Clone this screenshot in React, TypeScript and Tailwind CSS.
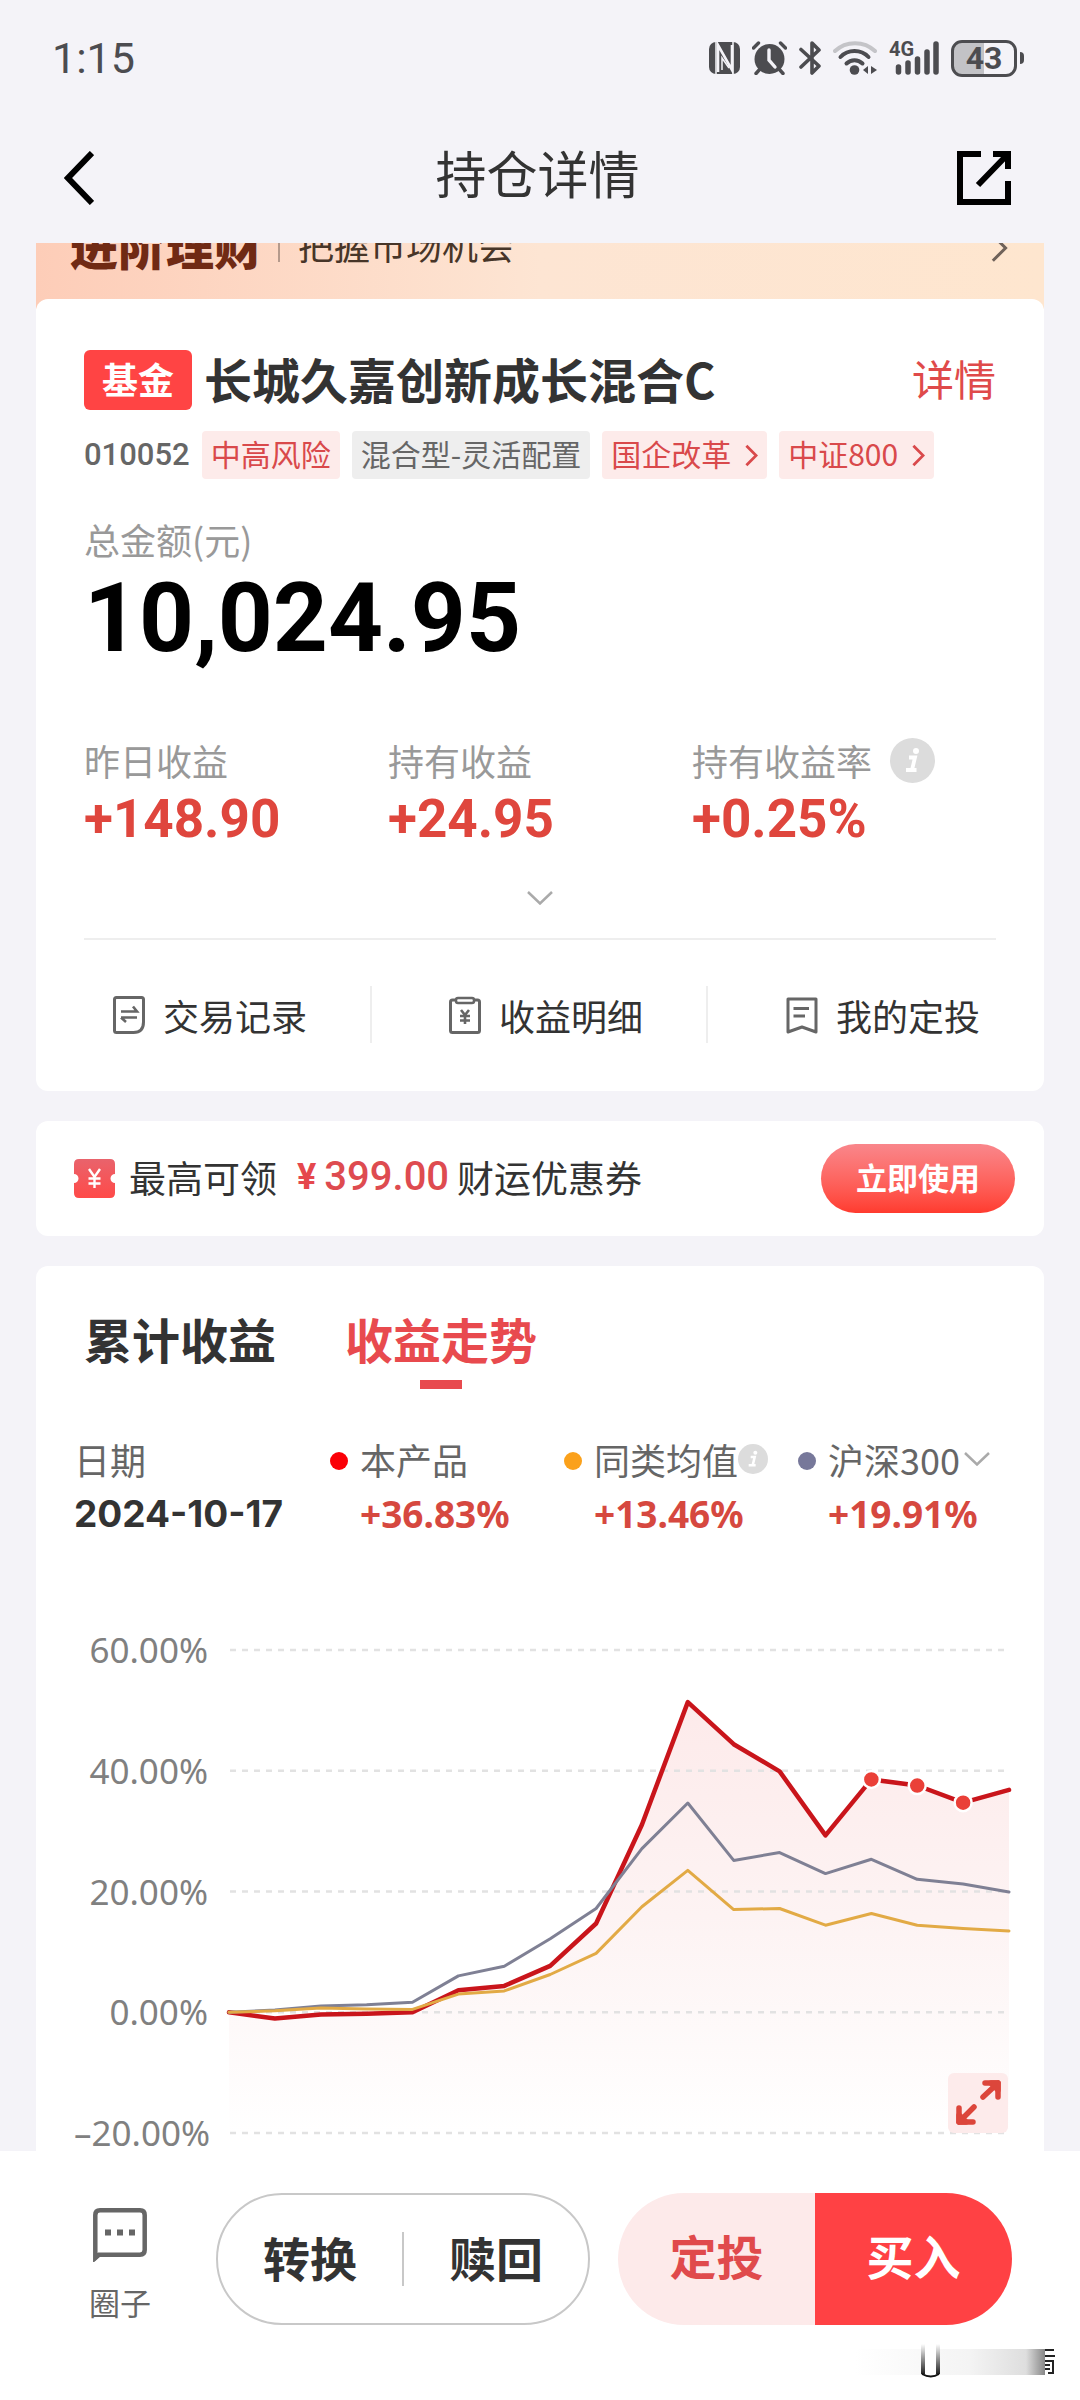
import type { ReactNode } from "react";

const TAGS = [
  { label: "中高风险", tone: "red", link: false },
  { label: "混合型-灵活配置", tone: "gray", link: false },
  { label: "国企改革", tone: "red", link: true },
  { label: "中证800", tone: "red", link: true },
];

const STATS = [
  { label: "昨日收益", value: "+148.90", info: false },
  { label: "持有收益", value: "+24.95", info: false },
  { label: "持有收益率", value: "+0.25%", info: true },
];

const TICKS = [60, 40, 20, 0, -20];

const FUND = [0, -1.06, -0.35, -0.24, 0, 3.66, 4.37, 7.68, 14.7, 31.06, 51.37, 44.4, 39.9, 29.3, 38.56, 37.55, 34.72, 36.83];
const PEERS = [0, 0.24, 0.71, 0.53, 0.47, 3.01, 3.54, 6.26, 9.74, 17.48, 23.5, 17, 17.18, 14.41, 16.35, 14.41, 13.87, 13.46];
const CSI300 = [0, 0.35, 1.06, 1.24, 1.65, 6.02, 7.62, 12.16, 17.18, 27.1, 34.66, 25.15, 26.45, 22.97, 25.33, 22.02, 21.26, 19.91];
const TRADE_DAYS = [14, 15, 16];

// chart geometry, in viewBox units
const W = 780;
const H = 519;
const PAD = 18;
const px = (i: number) => (i * W) / (FUND.length - 1);
const py = (v: number) => PAD + ((60 - v) / 80) * (H - PAD * 2);
const line = (data: number[]) => data.map((v, i) => `${px(i).toFixed(1)},${py(v).toFixed(1)}`).join(" ");

function InfoIcon({ className }: { className: string }) {
  return (
    <svg viewBox="0 0 45 45" className={className} aria-hidden="true">
      <circle cx="22.5" cy="22.5" r="22.5" fill="#dcdcdc" />
      <circle cx="26" cy="13" r="3" fill="#fff" />
      <path d="M19 19.5h6l-3 12.5M16 32h10.5" fill="none" stroke="#fff" strokeWidth="3.8" />
    </svg>
  );
}

function Chevron({ className, width = 2.5 }: { className: string; width?: number }) {
  return (
    <svg viewBox="0 0 14 24" className={className} fill="none" stroke="currentColor" strokeWidth={width} aria-hidden="true">
      <path d="M1.5 1.5 12 12 1.5 22.5" />
    </svg>
  );
}

function ChevronDown({ className }: { className: string }) {
  return (
    <svg viewBox="0 0 26 14" className={className} fill="none" stroke="currentColor" strokeWidth="2.5" aria-hidden="true">
      <path d="M1 1 13 12.5 25 1" />
    </svg>
  );
}

function StatusBar() {
  return (
    <div className="flex h-[116px] items-center justify-between pl-[52px] pr-14 text-[#4c4c50]">
      <span className="font-['Roboto',sans-serif] text-[43px] leading-[48px]">1:15</span>
      <div className="flex items-center gap-3">
        {/* NFC */}
        <svg viewBox="0 0 31 32" className="h-8 w-[31px]">
          <rect width="31" height="32" rx="7" fill="currentColor" />
          <path d="M7 0v32M24 0v32" stroke="#f4f3f8" strokeWidth="1.5" />
          <path d="M9 30V3l14 25V3" fill="none" stroke="#f4f3f8" strokeWidth="2.6" />
          <path d="M13 28V16l7 10" fill="none" stroke="#f4f3f8" strokeWidth="1.5" />
        </svg>
        {/* alarm */}
        <svg viewBox="0 0 35 34" className="h-[34px] w-[35px]" fill="none" stroke="currentColor" strokeLinecap="round">
          <circle cx="17.5" cy="18" r="15" fill="currentColor" stroke="none" />
          <path d="m1.500 7 5-5M33.500 7l-5-5M8 28l-4 4.500M27 28l4 4.500" strokeWidth="3.400" />
          <path d="M17 9v10l6 7" stroke="#f4f3f8" strokeWidth="3.400" />
        </svg>
        {/* bluetooth */}
        <svg viewBox="0 0 22 34" className="h-[34px] w-[22px]" fill="none" stroke="currentColor" strokeWidth="3.600" strokeLinejoin="round" strokeLinecap="round">
          <path d="M2 8.500 20 25l-7 7V2l7 7L2 26" />
        </svg>
        {/* wifi */}
        <svg viewBox="0 0 44 34" className="h-[34px] w-11" fill="none" stroke="currentColor" strokeWidth="4" strokeLinecap="round">
          <path d="M2 10C13-.5 31-.5 42 10" stroke="#c4c4c8" />
          <path d="M7.500 16C15 8 28 8 35.500 16M13.500 22.500c4.500-4.500 11.500-4.500 16 0" />
          <circle cx="21.500" cy="29" r="4.800" fill="currentColor" stroke="none" />
          <path d="M35 25v8l-5-4zM38 25v8l6-4z" fill="currentColor" stroke="none" />
        </svg>
        {/* signal */}
        <div className="relative h-[34px] w-[50px]">
          <span className="absolute -top-0.5 left-0 font-['Roboto',sans-serif] text-[20px] font-bold leading-5">4G</span>
          <svg viewBox="0 0 50 34" className="size-full" stroke="currentColor" strokeWidth="5.500" strokeLinecap="round">
            <path d="M9.500 26v5M19 22v9M28.500 18v13M38 11v20M47 3v28" />
          </svg>
        </div>
        <div className="flex items-center gap-[3px]">
          <span className="flex h-[37px] w-[66px] items-center justify-center rounded-[11px] border-[3px] border-current bg-linear-to-r from-[#c2c2c6] from-50% to-[#f4f3f8] to-50% font-['Roboto',sans-serif] text-[32px] font-bold leading-8">
            43
          </span>
          <span className="h-3 w-1 rounded-r bg-current" />
        </div>
      </div>
    </div>
  );
}

function Header() {
  return (
    <header className="grid h-[127px] grid-cols-[1fr_auto_1fr] items-center pb-1 pl-16 pr-[69px]">
      <button type="button" aria-label="返回" className="w-[54px]">
        <svg viewBox="0 0 30 54" className="h-[54px] w-[30px]" fill="none" stroke="#000" strokeWidth="6">
          <path d="M28 2 4 27l24 25" />
        </svg>
      </button>
      <h1 className="pb-3 text-[51px] leading-[60px] text-[#333]">持仓详情</h1>
      <button type="button" aria-label="分享" className="ml-auto">
        <svg viewBox="0 0 54 54" className="size-[54px]" fill="none" stroke="#000" strokeWidth="6">
          <path d="M24 3H3v48h48V30M36 3h15v15M51 3 21 34" />
        </svg>
      </button>
    </header>
  );
}

function Banner() {
  return (
    <a href="#learn" className="block h-[66px] overflow-hidden bg-linear-to-r from-[#fdcdb8] via-[#fde5d3] via-50% to-[#fee6cf]">
      <div className="-mt-[54px] flex h-[110px] items-center pl-[34px] pr-9">
        <span className="text-[48px] font-black leading-[60px] text-[#702a14]">进阶理财</span>
        <span className="ml-4 h-9 w-0.5 bg-[#b59a8c]" />
        <span className="ml-[18px] text-[36px] leading-[48px] text-[#473528]">把握市场机会</span>
        <Chevron className="ml-auto mt-2 h-[30px] w-[17px] text-[#6f625a]" />
      </div>
    </a>
  );
}

function RecordIcon() {
  return (
    <svg viewBox="0 0 32 38" className="h-[38px] w-8" fill="none" stroke="#666" strokeWidth="3">
      <path d="M3.500 1.500h25q2 0 2 2V26q0 10.500-10 10.500h-17q-2 0-2-2v-31q0-2 2-2z" />
      <path d="M8 15.500h16l-4-5M24 21.500H8M8 21.500l5 4.500" strokeWidth="2.600" />
    </svg>
  );
}

function DetailIcon() {
  return (
    <svg viewBox="0 0 32 38" className="h-[38px] w-8" fill="none" stroke="#666" strokeWidth="3">
      <rect x="1.500" y="4" width="29" height="32.500" rx="2" />
      <rect x="7" y="2" width="18" height="5" rx="2" fill="#fff" strokeWidth="2.500" />
      <path d="m12 14 4 5 4-5M16 19v9M11 20h10M11 24.500h10" strokeWidth="2.600" />
    </svg>
  );
}

function PlanIcon() {
  return (
    <svg viewBox="0 0 32 38" className="h-[38px] w-8" fill="none" stroke="#666" strokeWidth="3" strokeLinejoin="round">
      <path d="M2 3h28v33l-14-5-14 5z" />
      <path d="M7.500 12.500H23M7.500 20H19" />
    </svg>
  );
}

const ACTIONS: { label: string; icon: ReactNode }[] = [
  { label: "交易记录", icon: <RecordIcon /> },
  { label: "收益明细", icon: <DetailIcon /> },
  { label: "我的定投", icon: <PlanIcon /> },
];

function HoldingCard() {
  return (
    <section className="relative -mt-2.5 rounded-xl bg-white pb-12 pt-[51px]">
      <div className="px-12">
        <div className="flex h-[60px] items-center">
          <span className="flex h-[60px] w-[108px] items-center justify-center rounded-md bg-[#ff4444] pb-1 text-[36px] font-bold leading-[48px] text-white">基金</span>
          <h2 className="ml-3 pb-1 text-[48px] font-bold leading-[60px] text-[#333]">长城久嘉创新成长混合C</h2>
          <a href="#detail" className="ml-auto pb-1 text-[42px] leading-[60px] text-[#df4a4a]">详情</a>
        </div>

        <div className="mt-[21px] flex items-center gap-3">
          <span className="font-['Roboto',sans-serif] text-[31px] font-medium leading-[48px] text-[#666]">010052</span>
          {TAGS.map((t) => (
            <span
              key={t.label}
              className={`flex h-12 items-center gap-3.5 rounded px-[9px] pb-1 text-[30px] leading-[44px] ${
                t.tone === "red" ? "bg-[#fdebea] text-[#d9494b]" : "bg-[#eeeeee] text-[#666]"
              }`}
            >
              {t.label}
              {t.link && <Chevron width={3} className="mt-1 h-[23px] w-[13px]" />}
            </span>
          ))}
        </div>

        <p className="mt-9 text-[36px] leading-[48px] text-[#999]">总金额(元)</p>
        <p className="mt-[7px] font-['Roboto',sans-serif] text-[96px] font-bold leading-[96px] text-black">10,024.95</p>

        <dl className="mt-[70px] grid grid-cols-3">
          {STATS.map((s) => (
            <div key={s.label}>
              <dt className="flex items-center gap-[18px] text-[36px] leading-[48px] text-[#999]">
                {s.label}
                {s.info && <InfoIcon className="size-[45px]" />}
              </dt>
              <dd className="mt-[5px] font-['Roboto',sans-serif] text-[53px] font-bold leading-[60px] text-[#df463d]">{s.value}</dd>
            </div>
          ))}
        </dl>

        <button type="button" aria-label="展开" className="mx-auto mt-[42px] block">
          <ChevronDown className="h-3.5 w-[26px] text-[#aaa]" />
        </button>
        <hr className="mt-[33px] border-t-2 border-[#eeeeee]" />
      </div>

      <div className="mt-[46px] grid grid-cols-3 divide-x-2 divide-[#eeeeee]">
        {ACTIONS.map((a) => (
          <button key={a.label} type="button" className="flex h-[57px] items-center justify-center gap-[18px] pl-3.5 text-[36px] leading-[48px] text-[#333]">
            {a.icon}
            {a.label}
          </button>
        ))}
      </div>
    </section>
  );
}

function CouponCard() {
  return (
    <section className="mt-[30px] flex h-[115px] items-center rounded-xl bg-white pl-[38px] pr-[29px]">
      <svg viewBox="0 0 41 39" className="h-[39px] w-[41px]">
        <defs>
          <linearGradient id="ticket" x1="0" y1="0" x2="0" y2="1">
            <stop offset="0" stopColor="#e9636c" />
            <stop offset="1" stopColor="#ff4a48" />
          </linearGradient>
        </defs>
        <path d="M5 0h31q5 0 5 5v10a4.500 4.500 0 0 0 0 9v10q0 5-5 5H5q-5 0-5-5V24a4.500 4.500 0 0 0 0-9V5q0-5 5-5z" fill="url(#ticket)" />
        <path d="m15 10 5.500 8 5.500-8M20.500 18v11M14.500 19.500h12M14.500 24.500h12" fill="none" stroke="#fff" strokeWidth="2.400" />
      </svg>
      <p className="ml-3.5 flex items-center pb-1 text-[37px] leading-[48px] text-[#333]">
        最高可领
        <span className="ml-5 font-['Roboto',sans-serif] text-[36px] font-bold text-[#e5484d]">¥</span>
        <span className="ml-2 font-['Roboto',sans-serif] text-[40px] font-medium text-[#de4b50]">399.00</span>
        <span className="ml-2">财运优惠券</span>
      </p>
      <button type="button" className="ml-auto h-[69px] w-[194px] rounded-full bg-linear-to-b from-[#f9868b] to-[#ff3a2e] pb-1 text-[31px] font-bold leading-[48px] text-white">
        立即使用
      </button>
    </section>
  );
}

function LegendItem({ dot, value, children }: { dot: string; value: string; children: ReactNode }) {
  return (
    <div className="flex gap-3">
      <span className={`mt-[17px] size-[18px] shrink-0 rounded-full ${dot}`} />
      <div>
        <div className="flex h-12 items-center text-[36px] leading-[48px] text-[#666]">{children}</div>
        <p className="mt-[11px] font-['Noto_Sans',sans-serif] text-[37px] font-bold leading-10 text-[#d6483f]">{value}</p>
      </div>
    </div>
  );
}

function TrendChart() {
  return (
    <div className="mt-[98px] flex gap-[21px] pl-[38px] pr-[35px]">
      <div className="flex w-[134px] flex-col justify-between text-right font-['Noto_Sans',sans-serif] text-[35px] leading-9 text-[#808080]">
        {TICKS.map((t) => (
          <span key={t} className="whitespace-nowrap">{t < 0 ? "–" : ""}{Math.abs(t).toFixed(2)}%</span>
        ))}
      </div>
      <div className="relative flex-1">
        <svg viewBox={`0 0 ${W} ${H}`} className="block w-full overflow-visible" role="img" aria-label="收益走势">
          <defs>
            <linearGradient id="area" gradientUnits="userSpaceOnUse" x1="0" y1={py(52)} x2="0" y2={py(-20)}>
              <stop offset="0" stopColor="#fdeaea" />
              <stop offset="0.5" stopColor="#fdf3f3" />
              <stop offset="0.8" stopColor="#fefafa" />
              <stop offset="1" stopColor="#ffffff" />
            </linearGradient>
          </defs>
          <polygon points={`0,${py(-20)} ${line(FUND)} ${W},${py(-20)}`} fill="url(#area)" />
          {TICKS.map((t) => (
            <line key={t} x1="1" x2={W - 4} y1={py(t)} y2={py(t)} stroke="#e2e2e2" strokeWidth="2.500" strokeDasharray="6 6" />
          ))}
          <g fill="none" strokeLinejoin="round" strokeLinecap="round">
            <polyline points={line(FUND)} stroke="#c9151b" strokeWidth="4.500" />
            <polyline points={line(CSI300)} stroke="#7f8094" strokeWidth="3" />
            <polyline points={line(PEERS)} stroke="#e2aa45" strokeWidth="3" />
          </g>
          {TRADE_DAYS.map((i) => (
            <circle key={i} cx={px(i)} cy={py(FUND[i])} r="8.500" fill="#ea4038" stroke="#fff" strokeWidth="2.500" />
          ))}
        </svg>
        <button type="button" aria-label="全屏" className="absolute bottom-[18px] right-px size-[60px] rounded-md bg-[#fdebeb]">
          <svg viewBox="0 0 60 60" className="size-full" fill="none" stroke="#dc463b" strokeWidth="5.500" strokeLinecap="round" strokeLinejoin="round">
            <path d="M37 10h13v14M50 10 35 24M11 35v14h14M11 49l15-15" />
            <path d="M43 10h7v7zM11 42v7h7z" fill="#dc463b" />
          </svg>
        </button>
      </div>
    </div>
  );
}

function TrendCard() {
  return (
    <section className="mt-[30px] rounded-t-xl bg-white pt-[42px]">
      <div role="tablist" className="flex items-start gap-[69px] px-12 text-[48px] font-bold leading-[60px]">
        <button type="button" role="tab" aria-selected="false" className="text-[#333]">累计收益</button>
        <button type="button" role="tab" aria-selected="true" className="flex flex-col items-center gap-3 text-[#e84a4e]">
          收益走势
          <span className="h-[9px] w-[42px] bg-[#e84a4e]" />
        </button>
      </div>

      <div className="mt-[46px] grid grid-cols-[256px_1fr_1fr_1fr] pl-[38px] pr-3">
        <div>
          <p className="text-[36px] leading-[48px] text-[#666]">日期</p>
          <p className="mt-[11px] font-['Inter',sans-serif] text-[37px] font-bold leading-10 text-[#333]">2024-10-17</p>
        </div>
        <LegendItem dot="bg-[#fb0007]" value="+36.83%">本产品</LegendItem>
        <LegendItem dot="bg-[#fba11b]" value="+13.46%">
          同类均值
          <InfoIcon className="size-[30px]" />
        </LegendItem>
        <LegendItem dot="bg-[#77789a]" value="+19.91%">
          <select aria-label="对比指数" className="appearance-none bg-transparent">
            <option>沪深300</option>
          </select>
          <ChevronDown className="ml-1 h-3.5 w-[26px] text-[#aaa]" />
        </LegendItem>
      </div>

      <TrendChart />
    </section>
  );
}

// blurred strip left over the bottom-right corner
function Smudge() {
  return (
    <div className="absolute bottom-[22px] right-[25px] h-[34px] w-[200px] overflow-hidden" aria-hidden="true">
      <svg viewBox="0 0 200 34" className="size-full">
        <defs>
          <linearGradient id="fade" x1="0" x2="1" y1="0" y2="0">
            <stop offset="0" stopColor="#fff" />
            <stop offset="0.6" stopColor="#f4f4f4" />
            <stop offset="0.9" stopColor="#dedede" />
            <stop offset="1" stopColor="#888" />
          </linearGradient>
          <linearGradient id="drip" x1="0" x2="0" y1="0" y2="1">
            <stop offset="0" stopColor="#fff" />
            <stop offset="1" stopColor="#222" />
          </linearGradient>
        </defs>
        <rect y="5" width="190" height="26" fill="url(#fade)" />
        <path d="M68 2v27q8 5 15 0V2z" fill="#fff" />
        <path d="M66 0h4v30h-4zM81 0h4v30h-4z" fill="url(#drip)" />
        <path d="M67 30q9 5 17 0" fill="none" stroke="#111" strokeWidth="2" />
        <path d="M190 6h9M190 12h10M190 17h8v12h-5M190 21h5M190 25h5" fill="none" stroke="#222" strokeWidth="2" />
      </svg>
    </div>
  );
}

function BottomBar() {
  return (
    <footer className="relative flex grow items-start bg-white px-[68px] pb-[75px] pt-[42px]">
      <button type="button" className="flex w-[104px] flex-col items-center pt-[15px] text-[31px] leading-[44px] text-[#666]">
        <svg viewBox="0 0 54 54" className="h-[54px] w-[54px]" fill="none" stroke="#666" strokeWidth="4.500">
          <path d="M2.300 50V7q0-4.700 4.700-4.700h40q4.700 0 4.700 4.700v35q0 4.700-4.700 4.700H6z" />
          <path d="M2 46h6l-6 7z" fill="#666" stroke="none" />
          <path d="M12 24.500h6M24 24.500h6M36 24.500h6" strokeWidth="6" />
        </svg>
        <span className="mt-[18px]">圈子</span>
      </button>
      <div className="ml-11 flex h-[132px] flex-31 items-center rounded-full border-2 border-[#c8c8c8] text-[47px] font-bold leading-[60px] text-[#333]">
        <button type="button" className="flex-1 pb-1">转换</button>
        <span className="h-[54px] w-0.5 bg-[#c8c8c8]" />
        <button type="button" className="flex-1 pb-1">赎回</button>
      </div>
      <div className="ml-7 flex h-[132px] flex-33 overflow-hidden rounded-full text-[47px] font-bold leading-[60px]">
        <button type="button" className="flex-1 bg-[#fdeaea] pb-2 text-[#e04a4c]">定投</button>
        <button type="button" className="flex-1 bg-[#ff4144] pb-2 text-white">买入</button>
      </div>
      <Smudge />
    </footer>
  );
}

export default function App() {
  return (
    <div className="flex min-h-screen flex-col bg-[#f4f3f8] font-['Noto_Sans_CJK_SC',sans-serif]">
      <StatusBar />
      <Header />
      <main className="px-9">
        <Banner />
        <HoldingCard />
        <CouponCard />
        <TrendCard />
      </main>
      <BottomBar />
    </div>
  );
}
